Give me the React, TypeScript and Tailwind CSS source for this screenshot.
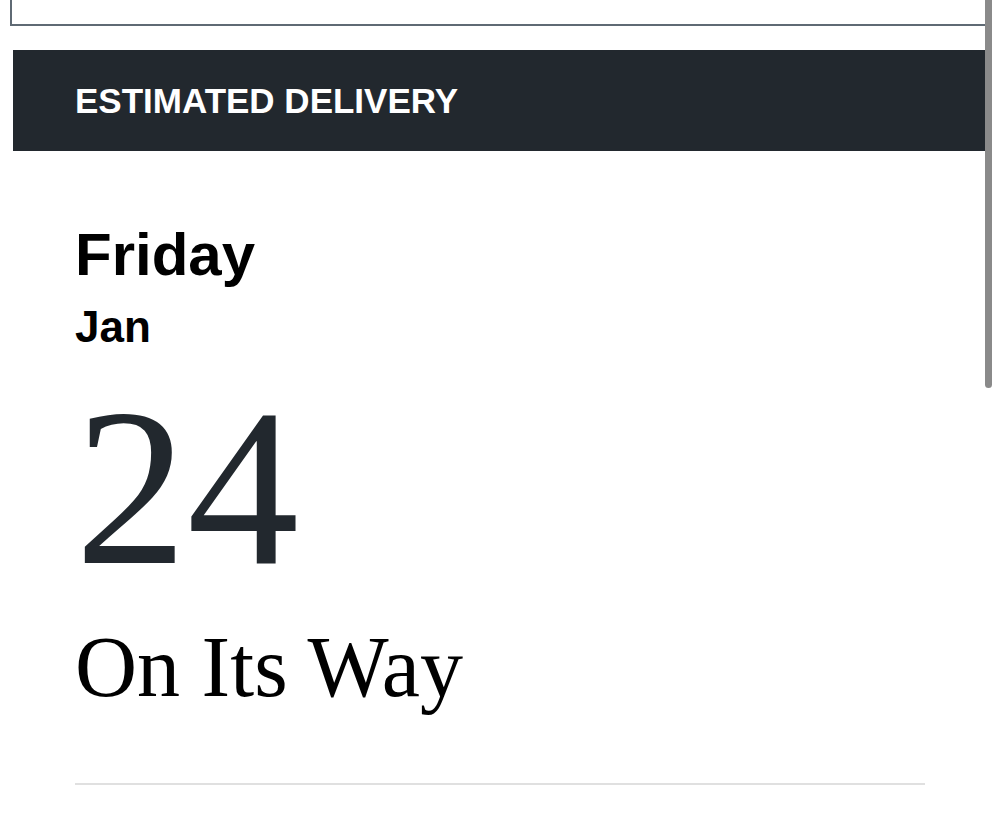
import React from "react";

const App: React.FC = () => {
  return (
    <div className="relative w-[1000px] h-[824px] overflow-hidden bg-white">
      {/* previous card, cut off at the top */}
      <div className="ml-[10px] mr-[12px] h-[26px] border-x-2 border-b-2 border-[#5f6a74]" />

      <div className="mx-[13px] mt-[24px] h-[101px] bg-[#22282e] flex items-center pl-[62px]">
        <h2
          className="text-[35px] leading-none font-bold text-white"
          style={{ fontFamily: '"Liberation Sans", Arial, sans-serif' }}
        >
          ESTIMATED DELIVERY
        </h2>
      </div>

      <div className="px-[75px]">
        <div style={{ fontFamily: '"Liberation Sans", Arial, sans-serif' }}>
          <p className="mt-[74px] text-[60px] leading-none font-bold text-black">Friday</p>
          <p className="mt-[20px] text-[44px] leading-none font-bold text-black">Jan</p>
        </div>
        <div style={{ fontFamily: '"Liberation Serif", "Times New Roman", serif' }}>
          <p className="mt-[26px] text-[224px] leading-none text-[#22282e]">24</p>
          <p className="mt-[25px] text-[86px] leading-none text-black">On Its Way</p>
        </div>
        <div className="mt-[73px] border-t-2 border-[#e0e0e0]" />
      </div>

      {/* scrollbar thumb */}
      <div className="absolute top-0 left-[985px] w-[7px] h-[388px] rounded-b-full bg-[#8a8a8a]" />
    </div>
  );
};

export default App;
